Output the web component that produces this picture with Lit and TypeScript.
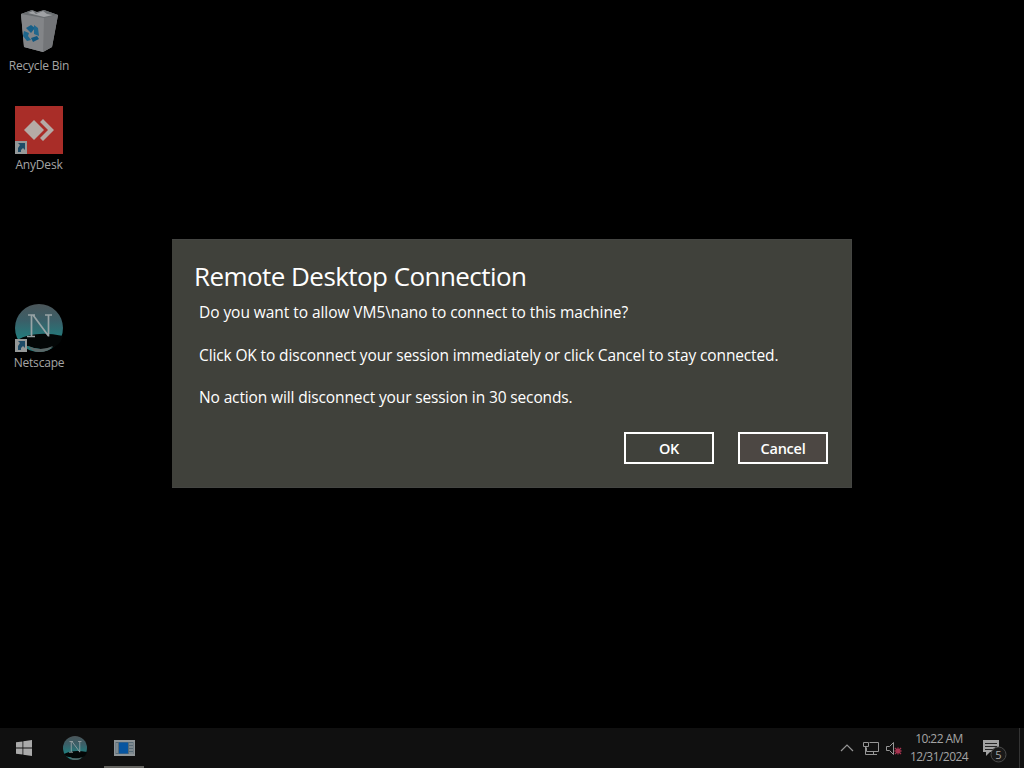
import { LitElement, html, css, svg } from 'lit';
import { customElement, property } from 'lit/decorators.js';

const shortcutArrow = svg`
  <rect x="0" y="35" width="12" height="13" fill="#959999"/>
  <path d="M3 46v-4l2-3-2-2h7v7l-2-2-2 2v2z" fill="#1d4b67"/>`;

const netscape = html`
  <svg viewBox="0 0 48 48" width="100%" height="100%">
    <defs>
      <linearGradient id="sky" x1="0" y1="0" x2="0" y2="1">
        <stop offset="0" stop-color="#4b5559"/>
        <stop offset=".35" stop-color="#3a5f68"/>
        <stop offset=".7" stop-color="#237b7c"/>
      </linearGradient>
    </defs>
    <circle cx="24" cy="24" r="24" fill="url(#sky)"/>
    <path d="M2 36Q20 26 48 32Q45 42 36 44Q25 47 13 42Q5 42 2 36Z" fill="#030606"/>
    <path d="M13 42Q25 48 38 42Q34 48 24 48Q17 48 13 42Z" fill="#5a6767"/>
    <path d="M13 11h7M30 11h7M12 32.500h8M16.500 11v21M18 11L33.500 32M33.500 11v21.500" fill="none" stroke="#98a3a5" stroke-width="1.7"/>
  </svg>`;

const icons: Record<string, unknown> = {
  bin: html`
    <svg viewBox="0 0 48 48" width="48" height="48">
      <path d="M6 7L17 3 22 5 29 3 43 8 37 40 28 45 9 40Z" fill="#898b8e"/>
      <path d="M6 7L29 10 28 45 9 40Z" fill="#838588"/>
      <path d="M29 10L43 8 37 40 28 45Z" fill="#737578"/>
      <path d="M6 7L17 3 22 6 29 3 43 8 29 11Z" fill="#696d70"/>
      <path d="M13 6l5-2 3 3 7-3 4 3 6 1-9 2Z" fill="#a0a2a5"/>
      <path d="M11 21l5-3 4 3-4 5Z" fill="#175f87"/>
      <path d="M19 18l4 3 1 8-5-2Z" fill="#21678d"/>
      <path d="M9 24l5 2-1 3 3 4-4 1-4-5Z" fill="#1d658b"/>
      <path d="M16 31l6-2 2 3-6 3Z" fill="#11577f"/>
    </svg>`,
  anydesk: html`
    <svg viewBox="0 0 48 48" width="48" height="48">
      <rect width="48" height="48" fill="#a92d28"/>
      <path d="M9 24L19 14 29 24 19 34Z" fill="#b5aaa5"/>
      <path d="M25 16L28 13 39 24 28 35 25 32 33 24Z" fill="#b5aaa5"/>
      ${shortcutArrow}
    </svg>`,
  netscape: html`
    <div class="layers">${netscape}
      <svg class="arrow" viewBox="0 35 12 13" width="12" height="13">${shortcutArrow}</svg>
    </div>`
};

@customElement('desktop-icon')
export class DesktopIcon extends LitElement {
  @property() name = '';
  @property() icon = '';

  static styles = css`
    :host {
      display: flex;
      flex-direction: column;
      align-items: center;
      width: 78px;
      font: 12px/16px "Open Sans", sans-serif;
      color: #a5a5a5;
    }
    svg {
      display: block;
    }
    .layers {
      position: relative;
      width: 48px;
      height: 48px;
    }
    .arrow {
      position: absolute;
      left: 0;
      bottom: 0;
    }
    .label {
      margin-top: 3px;
      letter-spacing: -0.2px;
      white-space: nowrap;
    }
  `;

  render() {
    return html`${icons[this.icon]}<div class="label">${this.name}</div>`;
  }
}

@customElement('session-dialog')
export class SessionDialog extends LitElement {
  static styles = css`
    :host {
      display: flex;
      flex-direction: column;
      box-sizing: border-box;
      width: 680px;
      height: 249px;
      padding: 18px 23px 23px 22px;
      background: #40413b;
      border: 1px solid #444542;
      border-width: 1px 1px 1px 0;
      color: #fff;
      font-family: "Open Sans", sans-serif;
    }
    h1 {
      margin: 0;
      font-size: 26px;
      line-height: 36px;
      font-weight: 400;
      letter-spacing: -0.56px;
      white-space: nowrap;
    }
    p {
      margin: 0 0 21px 5px;
      font-size: 15.5px;
      line-height: 21.5px;
      letter-spacing: -0.13px;
      white-space: nowrap;
    }
    h1 + p {
      margin-top: 8px;
      letter-spacing: -0.06px;
    }
    .buttons {
      display: flex;
      justify-content: flex-end;
      gap: 24px;
      margin-top: auto;
    }
    button {
      width: 90px;
      height: 32px;
      padding: 1px 0 0;
      border: 2px solid #fff;
      background: #40413b;
      color: #fff;
      font: 600 14.5px/26px "Open Sans", sans-serif;
      letter-spacing: -0.25px;
    }
    .cancel {
      background: #4c4743;
    }
  `;

  render() {
    return html`
      <h1>Remote Desktop Connection</h1>
      <p>Do you want to allow VM5\\nano to connect to this machine?</p>
      <p>Click OK to disconnect your session immediately or click Cancel to stay connected.</p>
      <p>No action will disconnect your session in 30 seconds.</p>
      <div class="buttons">
        <button>OK</button>
        <button class="cancel">Cancel</button>
      </div>`;
  }
}

@customElement('task-bar')
export class TaskBar extends LitElement {
  static styles = css`
    :host {
      display: flex;
      justify-content: space-between;
      height: 40px;
      background: #101010;
      color: #a4a4a4;
      font: 12px/18px "Open Sans", sans-serif;
    }
    svg {
      display: block;
    }
    .apps, .tray {
      display: flex;
      align-items: center;
    }
    .app {
      display: grid;
      place-items: center;
      box-sizing: border-box;
      width: 40px;
      height: 40px;
    }
    .start {
      width: 48px;
      margin-right: 7px;
    }
    .globe {
      width: 24px;
      height: 24px;
    }
    .running {
      margin-left: 9px;
      border-bottom: 2px solid #64635f;
      padding-top: 2px;
    }
    .clock {
      width: 62px;
      margin: 0 11px 1px 3px;
      text-align: center;
      letter-spacing: -0.55px;
      white-space: nowrap;
    }
    .notes {
      overflow: visible;
    }
    .show-desktop {
      width: 4px;
      height: 40px;
      margin-left: 12px;
      border-left: 1px solid #343434;
    }
  `;

  render() {
    return html`
      <div class="apps">
        <div class="app start">
          <svg width="16" height="16" viewBox="0 0 16 16" fill="#aaa">
            <path d="M0 2.3L6.5 1.4V7.5H0ZM7.3 1.3L16 0V7.5H7.3ZM0 8.4H6.5V14.6L0 13.7ZM7.3 8.4H16V16L7.3 14.7Z"/>
          </svg>
        </div>
        <div class="app"><div class="globe">${netscape}</div></div>
        <div class="app running">
          <svg width="21" height="16" viewBox="0 0 21 16">
            <rect width="21" height="16" fill="#8f9598"/>
            <rect x="1.5" y="2" width="18" height="12" fill="#586b76"/>
            <rect x="5" y="2.5" width="9" height="11" fill="#0755a0"/>
            <path d="M3 3v10M15 4h4M15 7h4M15 10h4M15 13h4" stroke="#a4a8aa"/>
          </svg>
        </div>
      </div>
      <div class="tray">
        <svg width="66" height="20" viewBox="0 0 66 20" fill="none" stroke="#969696">
          <path d="M2 13L8 7 14 13" stroke-width="1.2"/>
          <path d="M30.5 4.5H39.5V13.5H27.5V9.5M34.5 14v3M30 16.5h8M24.500 4.500h5v4h-5zM26.500 9v7.500h4"/>
          <path d="M47.500 8.500h3l4-4v12l-4-4h-3z"/>
          <path d="M56 10l6 6M62 10l-6 6M59 9.500v7M55.500 13h7" stroke="#a83350" stroke-width="1.3"/>
        </svg>
        <div class="clock"><div>10:22 AM</div><div>12/31/2024</div></div>
        <svg class="notes" width="26" height="30" viewBox="0 -2 26 30">
          <path d="M2 5h16v12H9l-4 4v-4H2z" fill="#a2a2a2"/>
          <path d="M4 8.500h12M4 11.500h12M4 14.500h8" stroke="#252525"/>
          <circle cx="17.500" cy="19.500" r="7.500" fill="#191919" stroke="#4a4a4a"/>
          <text x="17.500" y="23.500" text-anchor="middle" font-size="11" fill="#aaa">5</text>
        </svg>
        <div class="show-desktop"></div>
      </div>`;
  }
}

@customElement('app-root')
export class AppRoot extends LitElement {
  static styles = css`
    :host {
      display: grid;
      grid-template-rows: 728px 40px;
      width: 1024px;
      height: 768px;
      overflow: hidden;
      background: #000;
    }
    .desktop {
      display: grid;
      grid-template-columns: 172px 680px;
    }
    .icons {
      display: grid;
      grid-template-rows: repeat(4, 99px);
      align-content: start;
      padding-top: 7px;
    }
    .last {
      grid-row: 4;
    }
    session-dialog {
      margin-top: 239px;
    }
  `;

  render() {
    return html`
      <div class="desktop">
        <div class="icons">
          <desktop-icon icon="bin" name="Recycle Bin"></desktop-icon>
          <desktop-icon icon="anydesk" name="AnyDesk"></desktop-icon>
          <desktop-icon class="last" icon="netscape" name="Netscape"></desktop-icon>
        </div>
        <session-dialog></session-dialog>
      </div>
      <task-bar></task-bar>`;
  }
}
